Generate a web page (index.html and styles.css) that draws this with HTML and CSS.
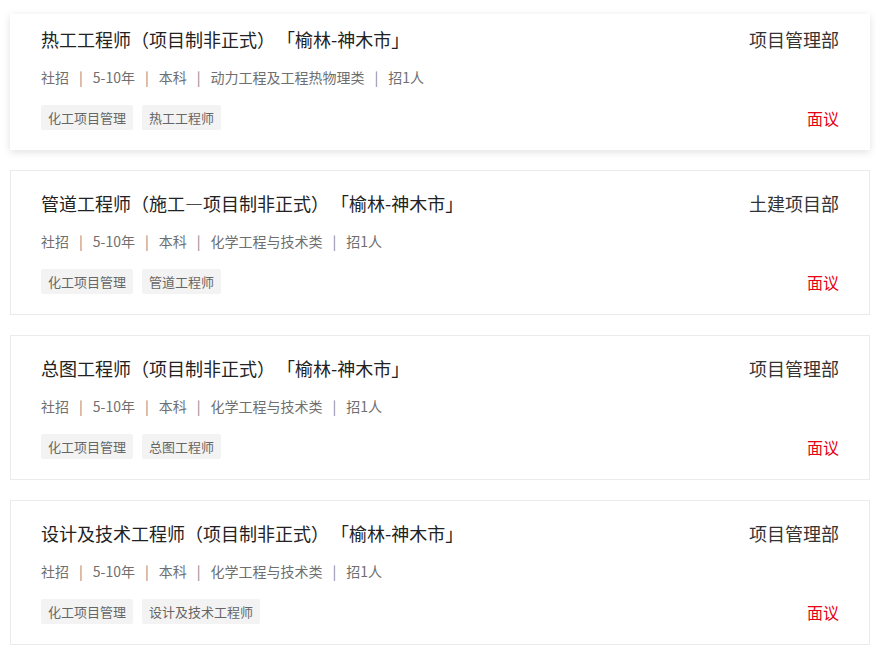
FILE: index.html
```html
<!DOCTYPE html>
<html lang="zh-CN">
<head>
<meta charset="utf-8">
<title>职位列表</title>
<link rel="stylesheet" href="styles.css">
</head>
<body>
<div class="list">
  <div class="card card-active">
    <div class="row">
      <div class="title">热工工程师（项目制非正式）<span class="loc">「榆林-神木市」</span></div>
      <div class="dept">项目管理部</div>
    </div>
    <div class="meta">社招<span class="sep">|</span>5-10年<span class="sep">|</span>本科<span class="sep">|</span>动力工程及工程热物理类<span class="sep">|</span>招1人</div>
    <div class="row bottom">
      <div class="tags"><span class="tag">化工项目管理</span><span class="tag">热工工程师</span></div>
      <div class="salary">面议</div>
    </div>
  </div>
  <div class="card">
    <div class="row">
      <div class="title">管道工程师（施工—项目制非正式）<span class="loc">「榆林-神木市」</span></div>
      <div class="dept">土建项目部</div>
    </div>
    <div class="meta">社招<span class="sep">|</span>5-10年<span class="sep">|</span>本科<span class="sep">|</span>化学工程与技术类<span class="sep">|</span>招1人</div>
    <div class="row bottom">
      <div class="tags"><span class="tag">化工项目管理</span><span class="tag">管道工程师</span></div>
      <div class="salary">面议</div>
    </div>
  </div>
  <div class="card">
    <div class="row">
      <div class="title">总图工程师（项目制非正式）<span class="loc">「榆林-神木市」</span></div>
      <div class="dept">项目管理部</div>
    </div>
    <div class="meta">社招<span class="sep">|</span>5-10年<span class="sep">|</span>本科<span class="sep">|</span>化学工程与技术类<span class="sep">|</span>招1人</div>
    <div class="row bottom">
      <div class="tags"><span class="tag">化工项目管理</span><span class="tag">总图工程师</span></div>
      <div class="salary">面议</div>
    </div>
  </div>
  <div class="card">
    <div class="row">
      <div class="title">设计及技术工程师（项目制非正式）<span class="loc">「榆林-神木市」</span></div>
      <div class="dept">项目管理部</div>
    </div>
    <div class="meta">社招<span class="sep">|</span>5-10年<span class="sep">|</span>本科<span class="sep">|</span>化学工程与技术类<span class="sep">|</span>招1人</div>
    <div class="row bottom">
      <div class="tags"><span class="tag">化工项目管理</span><span class="tag">设计及技术工程师</span></div>
      <div class="salary">面议</div>
    </div>
  </div>
</div>
</body>
</html>
```
FILE: styles.css
```css
html, body {
  margin: 0;
  padding: 0;
  background: #fff;
}
body {
  font-family: "Noto Sans CJK SC", "Microsoft YaHei", sans-serif;
  color: #333;
}
.list {
  width: 860px;
  padding: 14px 6px 0 10px;
  display: flex;
  flex-direction: column;
  gap: 20px;
}
.card {
  background: #fff;
  border: 1px solid #ebebeb;
  padding: 20px 30px 20px 30px;
  height: 145px;
  box-sizing: border-box;
}
.card-active {
  border: none;
  height: 136px;
  padding: 13px 30px 20px 31px;
  box-shadow: 0 2px 8px rgba(0, 0, 0, 0.12);
}
.card-active .dept,
.card-active .salary {
  margin-right: 1px;
}
.row {
  display: flex;
  justify-content: space-between;
  align-items: center;
}
.title {
  font-size: 18px;
  line-height: 24px;
  color: #222;
}
.loc {
  margin-left: 11px;
}
.dept {
  font-size: 18px;
  line-height: 24px;
  color: #333;
}
.meta {
  margin-top: 16px;
  font-size: 14px;
  line-height: 20px;
  color: #6f6f6f;
}
.sep {
  margin: 0 10px;
  color: #888;
}
.bottom {
  margin-top: 18px;
}
.tags {
  display: flex;
  gap: 9px;
}
.tag {
  display: block;
  height: 25px;
  line-height: 25px;
  padding: 0 7px;
  background: #f3f3f3;
  border-radius: 2px;
  font-size: 13px;
  color: #666;
}
.salary {
  font-size: 16px;
  line-height: 24px;
  color: #e60012;
}
```
